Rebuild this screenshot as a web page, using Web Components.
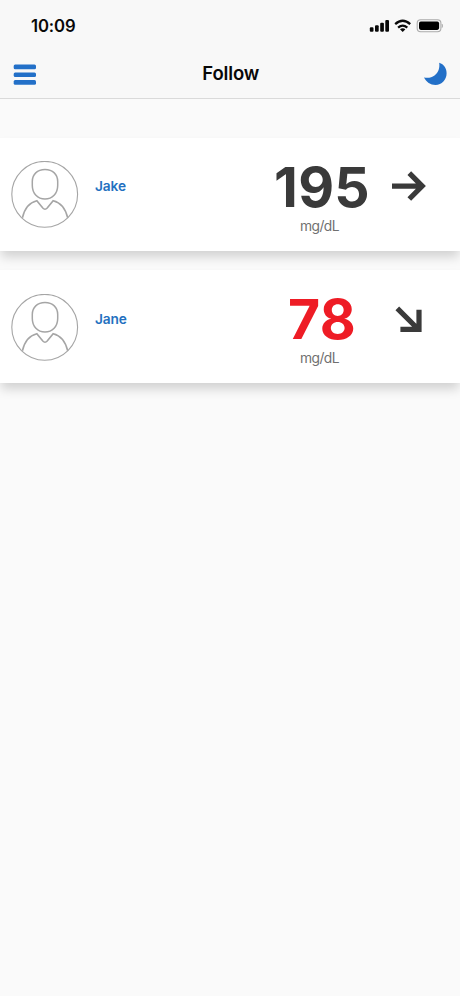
<!DOCTYPE html>
<html lang="en">
<head>
<meta charset="utf-8">
<title>Follow</title>
<style>
html,body{margin:0;height:100%;overflow:hidden}
body{background:#fafafa;font-family:Inter,"Liberation Sans",sans-serif}
</style>
</head>
<body>
<follow-app></follow-app>
<script>
const define=(name,html,render)=>customElements.define(name,class extends HTMLElement{
  connectedCallback(){
    if(this.shadowRoot)return;
    const t=document.createElement('template');
    t.innerHTML=render?render(this):html;
    this.attachShadow({mode:'open'}).append(t.content.cloneNode(true));
  }
});

define('status-bar',`<style>
:host{display:flex;height:50px;box-sizing:border-box;padding:2px 17px 0 31px;align-items:center;justify-content:space-between;color:#080808}
time{font-size:16.7px;font-weight:600;letter-spacing:-.1px;line-height:20px}
svg{display:block}
</style>
<time>10:09</time>
<svg width="74" height="14" viewBox="369 19 74 14">
<g fill="#080808"><rect x="369.8" y="27.3" width="3.7" height="4.5" rx="1.1"/><rect x="375" y="25.2" width="3.7" height="6.6" rx="1.1"/><rect x="380.2" y="22.7" width="3.7" height="9.1" rx="1.1"/><rect x="385.3" y="19.9" width="3.7" height="11.9" rx="1.1"/></g>
<g fill="none" stroke="#080808" stroke-width="2.3"><path d="M395.2 24.2Q402.7 17.4 410.2 24.2"/><path d="M398.1 27.6Q402.7 23.6 407.3 27.6"/></g>
<path d="M400 29.3Q402.7 27.3 405.4 29.3L402.7 32Z" fill="#080808"/>
<rect x="417.2" y="19.8" width="23.7" height="11.9" rx="3.5" fill="none" stroke="#aaa" stroke-width="1.1"/>
<rect x="419" y="21.6" width="20.1" height="8.3" rx="1.8" fill="#000"/>
<path d="M442 24Q443.6 25.7 442 27.7Z" fill="#aaa" stroke="#aaa" stroke-width=".4"/>
</svg>`);

define('nav-bar',`<style>
:host{display:grid;grid-template-columns:24px 1fr 24px;height:49px;box-sizing:border-box;padding:0 12px;align-items:center;border-bottom:1px solid #dadada}
h1{margin:0;text-align:center;font-size:18.5px;font-weight:600;letter-spacing:-.15px;line-height:24px;color:#080808;padding:0 0 2px 1.5px}
svg{display:block}
</style>
<svg width="24" height="24" viewBox="0 0 24 24" fill="#2370c8"><rect x="1.7" y="2.6" width="22.3" height="4.7" rx="1.5"/><rect x="1.7" y="10.4" width="22.3" height="4.7" rx="1.5"/><rect x="1.7" y="18.1" width="22.3" height="4.7" rx="1.5"/></svg>
<h1><slot></slot></h1>
<svg width="24" height="24" viewBox="0 0 24 24" fill="#2370c8"><path d="M15.2.7C20 2.2 22.6 6.5 22.6 11.2C22.6 17.8 17.8 22.9 11.5 22.9C6.5 22.9 2.2 19.9 0 15.4C3.6 16.2 7.5 15.8 10.5 13.5C14.5 10.5 15.9 5.8 15.2.7Z"/></svg>`);

define('user-avatar',`<style>:host{display:block;width:68px;height:68px}svg{display:block}</style>
<svg width="68" height="68" viewBox="0 0 68 68" fill="none" stroke="#a5a5a5">
<circle cx="33.7" cy="33.3" r="32.9" stroke-width="1.1"/>
<path d="M34 8.5C41.8 8.5 46.7 13.5 46.7 20.5V24.5C46.7 32.5 41.3 38 34 38C26.7 38 21.3 32.5 21.3 24.5V20.5C21.3 13.5 26.2 8.5 34 8.5Z" stroke-width="1.5"/>
<path d="M11.4 56.8C13.4 48 18.2 41.5 25.8 39.7L31.8 47Q34 49.4 36.2 47L42.2 39.7C49.8 41.5 54.6 48 56.7 56.8" stroke-width="1.6"/>
</svg>`);

const arrows={
  flat:'<path d="M0 15.1H30M17.3 2.2L30.2 15.1L17.3 28"/>',
  down:'<path d="M5.3 3.3L26 24M27 4.7V24.4H8.4"/>'
};
define('trend-arrow','',el=>`<style>:host{display:block}svg{display:block;overflow:visible}</style>
<svg width="36" height="30" viewBox="0 0 36 30" fill="none" stroke="#3a3a3a" stroke-width="5.2">${arrows[el.getAttribute('direction')]}</svg>`);

define('glucose-value',`<style>
:host{display:flex;flex-direction:column;align-items:center;color:#3a3a3a}
:host([low]){color:#ee1c25}
.value{font-size:55.3px;font-weight:700;line-height:56px;letter-spacing:.3px;white-space:nowrap;transform:translateX(2px)}
.unit{font-size:13.8px;line-height:18px;margin-top:2px;color:#707070;letter-spacing:-.55px;transform:translateX(-.5px)}
</style><span class="value"><slot></slot></span><span class="unit">mg/dL</span>`);

define('person-card','',el=>`<style>
:host{display:grid;grid-template-columns:68px 1fr 130px 36px;height:113px;box-sizing:border-box;padding:20px 32px 0 11px;background:#fff;box-shadow:0 7px 10px -1px rgba(0,0,0,.16);align-items:start}
user-avatar{margin-top:3px}
.name{font-size:13.7px;font-weight:600;line-height:20px;letter-spacing:-.1px;color:#2370c0;margin:18px 0 0 16px}
trend-arrow{margin-top:13px}
:host([trend=down]) user-avatar{margin-top:4.3px}
:host([trend=down]) .name{margin-top:19px}
:host([trend=down]) trend-arrow{margin-top:15px}
</style>
<user-avatar></user-avatar><span class="name">${el.getAttribute('name')}</span>
<slot name="reading"></slot><trend-arrow direction="${el.getAttribute('trend')}"></trend-arrow>`);

define('follow-app',`<style>
:host{display:flex;flex-direction:column;min-height:100vh;background:#fafafa}
header{background:#f8f8f8}
main{display:flex;flex-direction:column;gap:19px;padding-top:39px}
glucose-value{margin-right:14px;margin-top:1px}
</style>
<header><status-bar></status-bar><nav-bar>Follow</nav-bar></header>
<main>
<person-card name="Jake" trend="flat"><glucose-value slot="reading">195</glucose-value></person-card>
<person-card name="Jane" trend="down"><glucose-value slot="reading" low>78</glucose-value></person-card>
</main>`);
</script>
</body>
</html>
